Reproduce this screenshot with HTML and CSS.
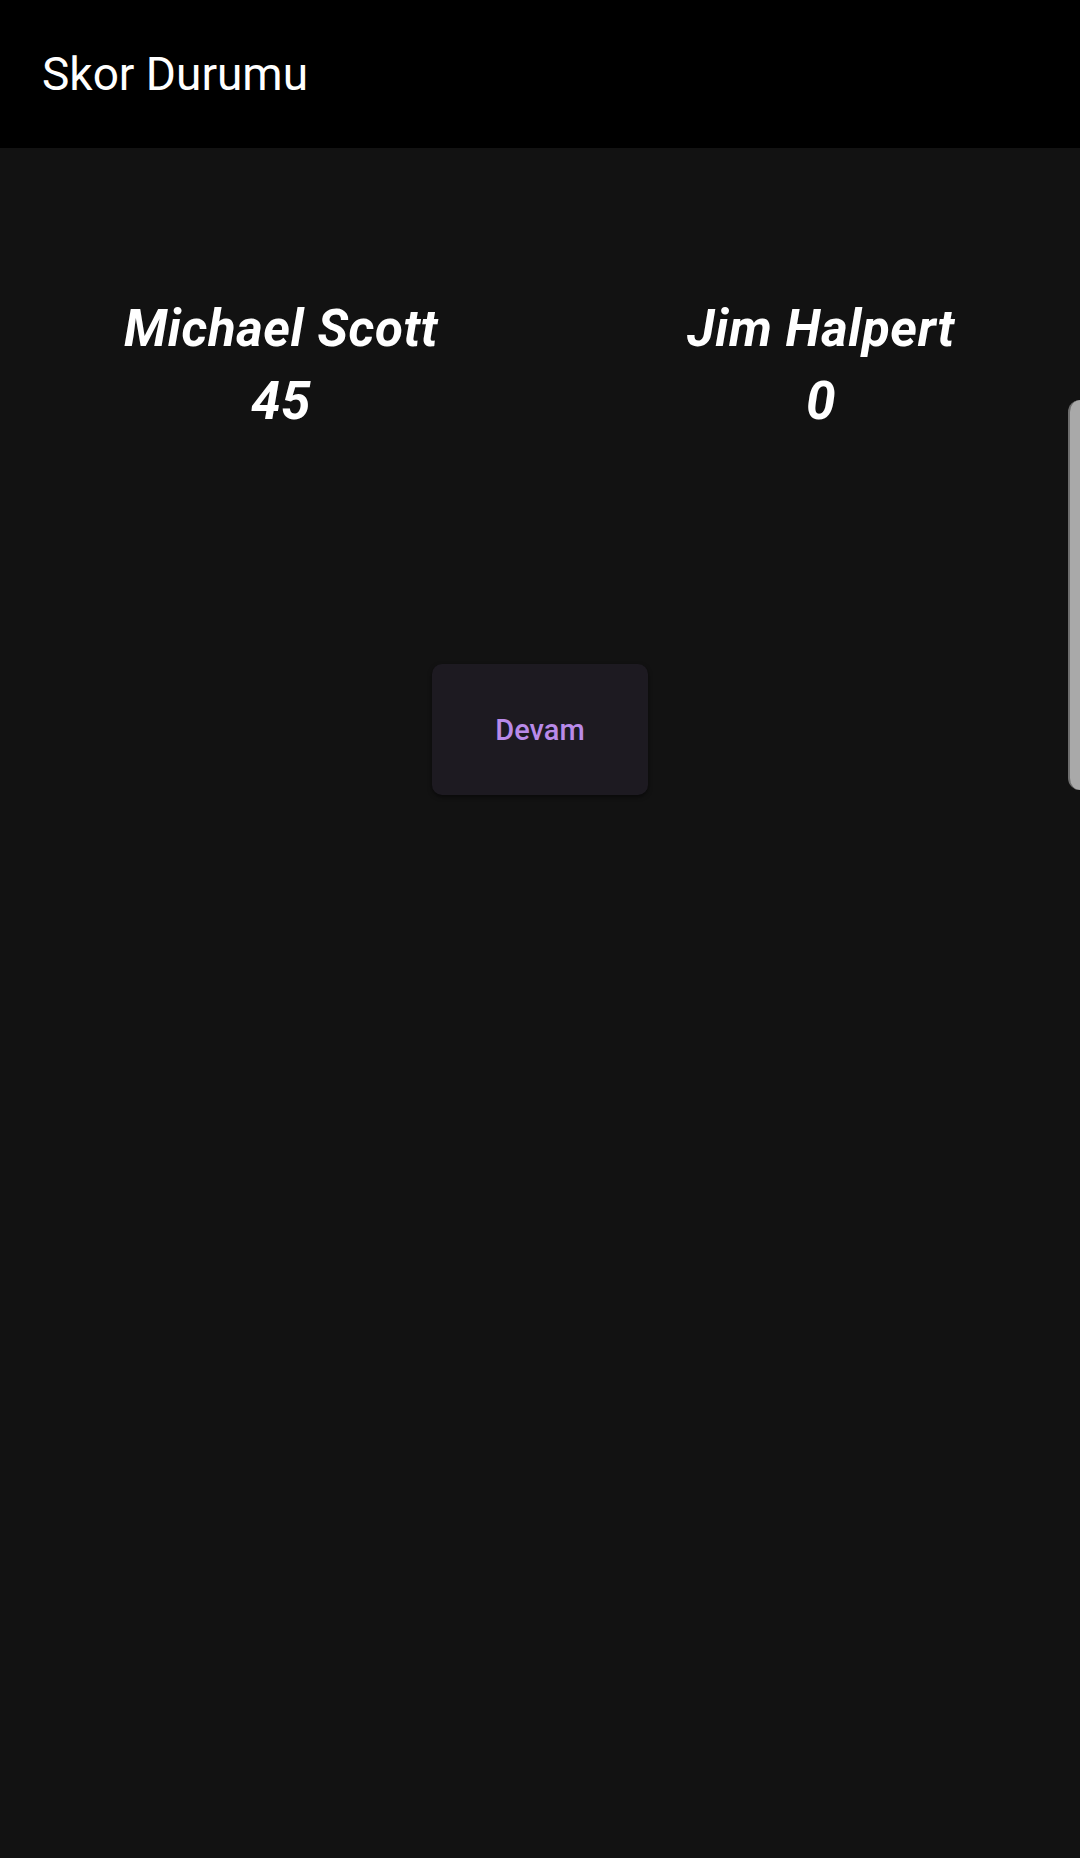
FILE: index.html
```html
<!DOCTYPE html>
<html lang="tr">
<head>
<meta charset="utf-8">
<title>Skor Durumu</title>
<link rel="stylesheet" href="styles.css">
</head>
<body>
<div class="screen">
  <header class="appbar">
    <h1 class="title">Skor Durumu</h1>
  </header>
  <main class="content">
    <section class="scores">
      <div class="player">
        <div class="name">Michael Scott</div>
        <div class="score">45</div>
      </div>
      <div class="player">
        <div class="name">Jim Halpert</div>
        <div class="score">0</div>
      </div>
    </section>
    <div class="actions">
      <button class="btn">Devam</button>
    </div>
  </main>
  <div class="edge-handle"></div>
</div>
</body>
</html>
```

FILE: styles.css
```css
html, body {
  margin: 0;
  padding: 0;
  background: #121212;
}
body {
  font-family: Roboto, "Noto Sans", "Liberation Sans", sans-serif;
  color: #ffffff;
}
.screen {
  position: relative;
  width: 1080px;
  height: 1858px;
  overflow: hidden;
  background: #121212;
}
.appbar {
  height: 148px;
  background: #000000;
  display: flex;
  align-items: center;
  padding-left: 42px;
  box-sizing: border-box;
}
.title {
  margin: 0;
  font-size: 46px;
  font-weight: 400;
  color: #ffffff;
}
.content {
  display: flex;
  flex-direction: column;
}
.scores {
  display: grid;
  grid-template-columns: 1fr 1fr;
  padding-top: 145px;
}
.player {
  display: flex;
  flex-direction: column;
  align-items: center;
  padding-left: 22px;
  font-style: italic;
  font-weight: 700;
}
.name {
  font-size: 51px;
  line-height: 72px;
  letter-spacing: 0.6px;
}
.score {
  font-size: 53px;
  line-height: 72px;
  letter-spacing: 0.6px;
}
.actions {
  display: flex;
  justify-content: center;
  padding-top: 227px;
}
.btn {
  width: 216px;
  height: 131px;
  border: none;
  border-radius: 10px;
  background: #1d1a21;
  color: #b98ae9;
  font-family: Roboto, "Noto Sans", "Liberation Sans", sans-serif;
  font-size: 29px;
  font-weight: 500;
  box-shadow: 0 2px 4px rgba(0, 0, 0, 0.5);
  padding: 0;
}
.edge-handle {
  position: absolute;
  left: 1068px;
  top: 400px;
  width: 12px;
  height: 390px;
  box-sizing: border-box;
  background: #a9a9a9;
  border-left: 2px solid #6e6e6e;
  border-radius: 12px 0 0 12px;
}
```
